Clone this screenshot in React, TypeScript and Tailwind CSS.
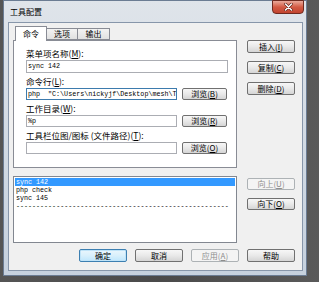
import React from "react";

const ui = "font-['Noto_Sans_CJK_SC','Liberation_Sans',sans-serif]";
const mono = "font-['Liberation_Mono','DejaVu_Sans_Mono',monospace]";

const btnBase =
  "flex items-center justify-center rounded-[2px] border text-[8px] leading-none whitespace-nowrap";
const btnNormal =
  "border-[#707070] bg-linear-to-b from-[#f7f7f7] via-[#e9e9e9] to-[#d5d5d5] text-black";
const btnDisabled = "border-[#adb2b5] bg-[#f4f4f4] text-[#8d8d8d]";
const btnDefault =
  "border-[#3c7fb1] bg-linear-to-b from-[#eaf6fd] via-[#d9f0fc] to-[#bee6fd] text-black shadow-[inset_0_0_0_1px_#bfe3f8]";

function Btn({
  children,
  w = "w-[48px]",
  h = "h-[13px]",
  kind = "normal",
}: {
  children: React.ReactNode;
  w?: string;
  h?: string;
  kind?: "normal" | "disabled" | "default";
}) {
  const k = kind === "disabled" ? btnDisabled : kind === "default" ? btnDefault : btnNormal;
  return <div className={`${btnBase} ${k} ${w} ${h}`}>{children}</div>;
}

function Label({ children }: { children: React.ReactNode }) {
  return <div className="h-[10px] text-[8.5px] leading-[10px] text-black whitespace-nowrap">{children}</div>;
}

function Input({
  value,
  w,
  h = "h-[12px]",
  focused = false,
}: {
  value: string;
  w: string;
  h?: string;
  focused?: boolean;
}) {
  return (
    <div
      className={`${w} ${h} flex items-center overflow-hidden whitespace-pre border bg-white pl-[1px] ${
        focused ? "border-[#3d7bad]" : "border-[#abadb3]"
      } ${mono} text-[6.7px] leading-none text-black`}
    >
      {value}
    </div>
  );
}

export default function App() {
  return (
    <div className={`w-[319px] h-[282px] overflow-hidden bg-linear-to-r from-[#555555] via-[#4a4a4a] to-[#5a5a5a] pl-[3px] ${ui}`}>
      <div className="w-[304px] h-[276px] border border-[#6b7c93] bg-linear-to-b from-[#dfe4ea] to-[#c6d1de] flex flex-col">
        {/* title bar */}
        <div className="h-[21px] flex items-start">
          <div className="pl-[6px] pt-[7px] text-[8px] leading-[8px] text-black">工具配置</div>
          <div className="ml-auto mr-[2px] -mt-px w-[32px] h-[14px] rounded-b-[4px] border border-[#6e2a20] bg-linear-to-b from-[#e9a99b] via-[#d35a44] to-[#c24430] flex items-center justify-center">
            <svg width="9" height="8" viewBox="0 0 9 8">
              <path d="M1.5 1 L7.5 7 M7.5 1 L1.5 7" stroke="#5a1d14" strokeWidth="2.6" strokeLinecap="round" />
              <path d="M1.5 1 L7.5 7 M7.5 1 L1.5 7" stroke="#ffffff" strokeWidth="1.5" strokeLinecap="round" />
            </svg>
          </div>
        </div>
        {/* client */}
        <div className="ml-[4px] mr-[3px] h-[249px] border border-[#8796aa] bg-[#f0f0f0] pt-[4px] pl-[4px] flex flex-col">
          {/* row 1 */}
          <div className="flex gap-[10px]">
            <div className="w-[224px] flex flex-col">
              <div className="h-[13px] flex items-end">
                <div className="ml-[2px] w-[32px] h-[15px] -mb-[1px] relative z-10 border border-b-0 border-[#898c95] bg-white flex items-center justify-center text-[8px] leading-none text-black">
                  命令
                </div>
                <div className="w-[31px] h-[12px] border border-l-0 border-[#898c95] bg-linear-to-b from-[#f3f3f3] to-[#e1e1e1] flex items-center justify-center text-[8px] leading-none text-black">
                  选项
                </div>
                <div className="w-[32px] h-[12px] border border-l-0 border-[#898c95] bg-linear-to-b from-[#f3f3f3] to-[#e1e1e1] flex items-center justify-center text-[8px] leading-none text-black">
                  输出
                </div>
              </div>
              <div className="h-[128px] border border-[#898c95] bg-white pt-[7px] pl-[12px] flex flex-col gap-[3px]">
                <div className="flex flex-col">
                  <Label>
                    菜单项名称(<u>M</u>):
                  </Label>
                  <div className="mt-[2px]">
                    <Input value="sync 142" w="w-[202px]" h="h-[13px]" />
                  </div>
                </div>
                <div className="flex flex-col">
                  <Label>
                    命令行(<u>L</u>):
                  </Label>
                  <div className="mt-[2px] flex gap-[5px]">
                    <Input value={'php  "C:\\Users\\nickyjf\\Desktop\\mesh\\T'} w="w-[151px]" focused />
                    <Btn w="w-[45px]" h="h-[12px]">
                      浏览(<u>B</u>)
                    </Btn>
                  </div>
                </div>
                <div className="flex flex-col">
                  <Label>
                    工作目录(<u>W</u>):
                  </Label>
                  <div className="mt-[2px] flex gap-[5px]">
                    <Input value="%p" w="w-[151px]" />
                    <Btn w="w-[45px]" h="h-[12px]">
                      浏览(<u>R</u>)
                    </Btn>
                  </div>
                </div>
                <div className="flex flex-col">
                  <Label>
                    工具栏位图/图标 (文件路径)(<u>T</u>):
                  </Label>
                  <div className="mt-[2px] flex gap-[5px]">
                    <Input value="" w="w-[151px]" />
                    <Btn w="w-[45px]" h="h-[12px]">
                      浏览(<u>O</u>)
                    </Btn>
                  </div>
                </div>
              </div>
            </div>
            <div className="w-[48px] pt-[13px] flex flex-col gap-[8px]">
              <Btn>
                插入(<u>I</u>)
              </Btn>
              <Btn>
                复制(<u>C</u>)
              </Btn>
              <Btn>
                删除(<u>D</u>)
              </Btn>
            </div>
          </div>
          {/* row 2 */}
          <div className="mt-[8px] flex gap-[10px]">
            <div className={`w-[224px] h-[67px] border border-[#828790] bg-white p-[1px] ${mono} text-[6.7px] text-black overflow-hidden`}>
              <div className="h-[8px] leading-[8px] bg-[#3399ff] text-white pl-[1px] whitespace-nowrap">sync 142</div>
              <div className="h-[8px] leading-[8px] pl-[1px] whitespace-nowrap">php check</div>
              <div className="h-[8px] leading-[8px] pl-[1px] whitespace-nowrap">sync 145</div>
              <div className="h-[8px] leading-[8px] pl-[1px] whitespace-nowrap">
                {"-".repeat(53)}
              </div>
            </div>
            <div className="w-[48px] pt-[2px] flex flex-col gap-[8px]">
              <Btn h="h-[12px]" kind="disabled">
                向上(<u>U</u>)
              </Btn>
              <Btn h="h-[12px]">
                向下(<u>O</u>)
              </Btn>
            </div>
          </div>
          {/* row 3 */}
          <div className="mt-[6px] pr-[7px] flex justify-end gap-[8px]">
            <Btn kind="default">确定</Btn>
            <Btn>取消</Btn>
            <Btn kind="disabled">
              应用(<u>A</u>)
            </Btn>
            <Btn>帮助</Btn>
          </div>
        </div>
      </div>
    </div>
  );
}
